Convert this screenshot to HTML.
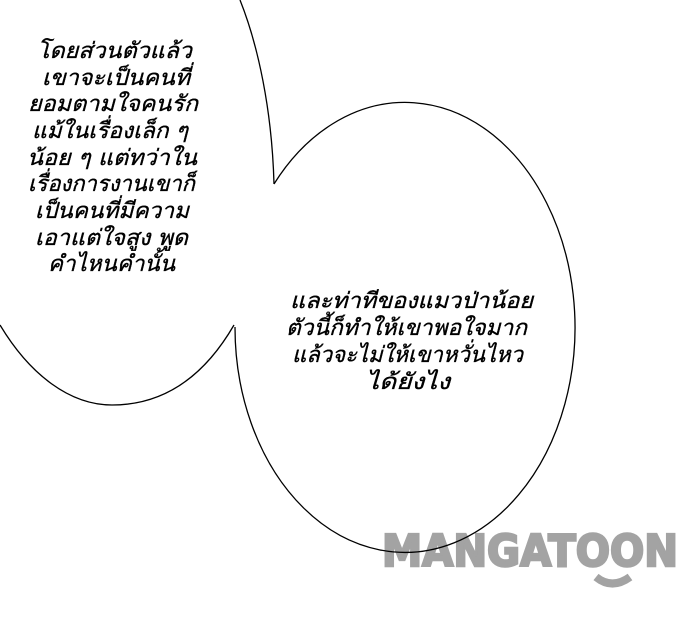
<!DOCTYPE html>
<html><head><meta charset="utf-8"><style>
html,body{margin:0;padding:0;background:#fff;width:680px;height:641px;overflow:hidden}
svg{display:block}
.t{font-family:"DejaVu Sans","Liberation Sans",sans-serif;font-style:italic;font-size:22px;fill:#000;stroke:#000;stroke-width:0.35}
.w{font-family:"DejaVu Sans","Liberation Sans",sans-serif;font-weight:bold;font-size:44px;fill:#a3a3a3;stroke:#a3a3a3;stroke-width:2.5}
</style></head><body>
<svg width="680" height="641" viewBox="0 0 680 641" xmlns="http://www.w3.org/2000/svg">
<rect width="680" height="641" fill="#fff"/>
<text class="w" x="382" y="566" textLength="296" lengthAdjust="spacingAndGlyphs">MANGATOON</text>
<path d="M596,577 Q612,590 630,577" stroke="#a3a3a3" stroke-width="8" fill="none"/>
<g fill="none" stroke="#000" stroke-width="1.3">
<path d="M240,0 C258,45 272,110 274,184"/>
<path d="M0,325 C30,375 70,405 112,405 C165,405 205,375 234,325"/>
<path d="M274,184 A170,225 0 1 1 235,327"/>
</g>
<g class="t">
<text x="37" y="58" textLength="155" lengthAdjust="spacingAndGlyphs">โดยส่วนตัวแล้ว</text>
<text x="42" y="85" textLength="148" lengthAdjust="spacingAndGlyphs">เขาจะเป็นคนที่</text>
<text x="28" y="111" textLength="170" lengthAdjust="spacingAndGlyphs">ยอมตามใจคนรัก</text>
<text x="32" y="138" textLength="156" lengthAdjust="spacingAndGlyphs">แม้ในเรื่องเล็ก ๆ</text>
<text x="27" y="165" textLength="170" lengthAdjust="spacingAndGlyphs">น้อย ๆ แต่ทว่าใน</text>
<text x="28" y="191" textLength="167" lengthAdjust="spacingAndGlyphs">เรื่องการงานเขาก็</text>
<text x="35" y="218" textLength="154" lengthAdjust="spacingAndGlyphs">เป็นคนที่มีความ</text>
<text x="35" y="245" textLength="153" lengthAdjust="spacingAndGlyphs">เอาแต่ใจสูง พูด</text>
<text x="48" y="271" textLength="127" lengthAdjust="spacingAndGlyphs">คำไหนคำนั้น</text>
<text x="290" y="308" textLength="243" lengthAdjust="spacingAndGlyphs">และท่าทีของแมวป่าน้อย</text>
<text x="286" y="335" textLength="241" lengthAdjust="spacingAndGlyphs">ตัวนี้ก็ทำให้เขาพอใจมาก</text>
<text x="292" y="362" textLength="231" lengthAdjust="spacingAndGlyphs">แล้วจะไม่ให้เขาหวั่นไหว</text>
<text x="366" y="389" textLength="84" lengthAdjust="spacingAndGlyphs">ได้ยังไง</text>
</g>
</svg>
</body></html>
